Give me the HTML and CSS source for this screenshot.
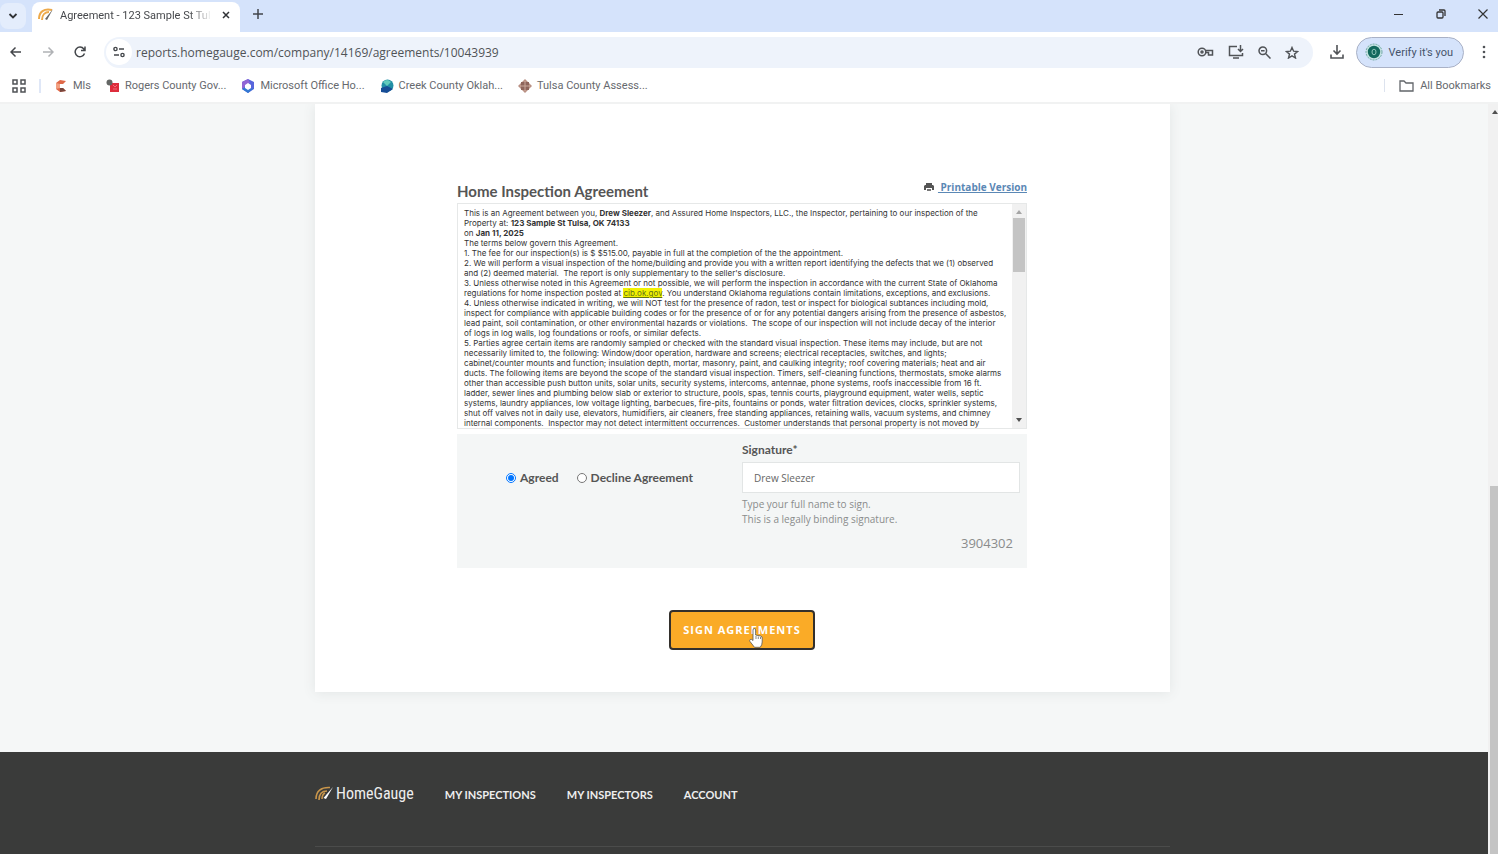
FILE: index.html
```html
<!DOCTYPE html>
<html lang="en">
    <head>
        <meta charset="utf-8">
        <title>Agreement - 123 Sample St Tulsa</title>
        <link rel="stylesheet" href="styles.css">
    </head>
    <body>
        <header class="browser">
            <div class="tab-strip">
                <button class="tab-search" aria-label="Search tabs">
                    <svg width="10" height="8" viewBox="0 0 10 8"><path d="M1.500 2l3.500 3.500L8.500 2" fill="none" stroke="#303236" stroke-width="1.800"/></svg>
                </button>
                <div class="tab">
                    <svg class="tab-icon" width="16" height="14" viewBox="0 0 16 14"><path d="M1 11C1 4 6 0 14 2M4 12C4 7 7 4 11 4" fill="none" stroke="#eda94a" stroke-width="2"/><path d="M15 1L7 11l2 1z" fill="#666"/></svg>
                    <span class="tab-title">Agreement - 123 Sample St Tul</span>
                    <button class="tab-close" aria-label="Close tab">
                        <svg width="8" height="8" viewBox="0 0 8 8"><path d="M1 1l6 6M7 1L1 7" stroke="#303236" stroke-width="1.500"/></svg>
                    </button>
                </div>
                <button class="tab-new" aria-label="New tab">
                    <svg width="10" height="10" viewBox="0 0 10 10"><path d="M5 0v10M0 5h10" stroke="#41454c" stroke-width="1.500"/></svg>
                </button>
                <div class="window-buttons">
                    <button aria-label="Minimize"><svg width="10" height="10" viewBox="0 0 10 10"><path d="M0 5.500h9" stroke="#333"/></svg></button>
                    <button aria-label="Restore"><svg width="10" height="10" viewBox="0 0 10 10" fill="none" stroke="#333" stroke-width="1.300"><rect x="1" y="3" width="6" height="6" rx="1"/><path d="M3 1h5a1 1 0 0 1 1 1v5"/></svg></button>
                    <button aria-label="Close"><svg width="10" height="10" viewBox="0 0 10 10"><path d="M0.500 0.500l9 9M9.500 0.500l-9 9" stroke="#333" stroke-width="1.200"/></svg></button>
                </div>
            </div>

            <div class="toolbar">
                <nav class="toolbar-nav">
                    <button aria-label="Back"><svg width="12" height="12" viewBox="0 0 12 12" fill="none" stroke="#44474b" stroke-width="1.500"><path d="M11 6H1M5.500 1.500L1 6l4.500 4.500"/></svg></button>
                    <button aria-label="Forward"><svg width="12" height="12" viewBox="0 0 12 12" fill="none" stroke="#b0b2b5" stroke-width="1.500"><path d="M1 6h10M6.500 1.500L11 6l-4.500 4.500"/></svg></button>
                    <button aria-label="Reload"><svg width="12" height="12" viewBox="0 0 12 12" fill="none" stroke="#44474b" stroke-width="1.500"><path d="M10.500 7.500A4.800 4.800 0 1 1 9.800 3L11 4.500M11 0.500v4H7"/></svg></button>
                </nav>
                <div class="omnibox">
                    <button class="site-info" aria-label="Site information"><svg width="12" height="12" viewBox="0 0 12 12" fill="none" stroke="#44474b" stroke-width="1.400"><circle cx="2.500" cy="3" r="1.600"/><path d="M6 3h5M1 9h5"/><circle cx="9.500" cy="9" r="1.600"/></svg></button>
                    <input class="url" type="text" aria-label="Address" value="reports.homegauge.com/company/14169/agreements/10043939">
                    <div class="omnibox-actions">
                        <button aria-label="Passwords"><svg width="17" height="10" viewBox="0 0 17 10" fill="none" stroke="#505357" stroke-width="1.500"><circle cx="5" cy="5" r="3.800"/><circle cx="5" cy="5" r="1"/><path d="M8.500 3.500H15.500V8h-4V5.500H9"/></svg></button>
                        <button aria-label="Install app"><svg width="16" height="14" viewBox="0 0 16 14" fill="none" stroke="#505357" stroke-width="1.500"><path d="M9 1.500H1.500v9h13V8M5 13h6M12.500 0v6M10 4l2.500 2.500L15 4"/></svg></button>
                        <button aria-label="Zoom"><svg width="13" height="13" viewBox="0 0 13 13" fill="none" stroke="#505357" stroke-width="1.500"><circle cx="4.800" cy="4.800" r="3.800"/><path d="M7.800 7.800L12.500 12.500M3 4.800h3.600"/></svg></button>
                        <button aria-label="Bookmark"><svg width="14" height="13" viewBox="0 0 14 13" fill="none" stroke="#505357" stroke-width="1.400"><path d="M7 1.500l1.600 3.700 4 .3-3.100 2.600 1 3.900L7 9.900 3.500 12l1-3.900L1.400 5.500l4-.3z"/></svg></button>
                    </div>
                </div>
                <button class="download" aria-label="Downloads"><svg width="14" height="14" viewBox="0 0 14 14" fill="none" stroke="#505357" stroke-width="1.600"><path d="M7 0v9M3.500 5.500L7 9l3.500-3.500M1 9.500V13h12V9.500"/></svg></button>
                <button class="verify">
                    <svg width="18" height="18" viewBox="0 0 18 18"><circle cx="9" cy="9" r="8" fill="#c5e3e2" stroke="#75aaa7" stroke-dasharray="2 1"/><circle cx="9" cy="9" r="6.200" fill="#12695c"/><ellipse cx="9" cy="9" rx="2" ry="2.800" fill="none" stroke="#8cc4b6"/></svg>
                    Verify it's you
                </button>
                <button class="more" aria-label="More"><svg width="4" height="14" viewBox="0 0 4 14" fill="#505357"><circle cx="2" cy="2" r="1.300"/><circle cx="2" cy="7" r="1.300"/><circle cx="2" cy="12" r="1.300"/></svg></button>
            </div>

            <nav class="bookmarks">
                <button class="apps" aria-label="Apps"><svg width="14" height="14" viewBox="0 0 14 14" fill="none" stroke="#505357" stroke-width="1.500"><path d="M1 1h4v4H1zM9 1h4v4H9zM1 9h4v4H1zM9 9h4v4H9z"/></svg></button>
                <a class="bookmark" href="#"><svg width="14" height="14" viewBox="0 0 14 14"><path d="M12 2L6 1 2 4v6l4 3 6-1-3-3H6V5h3z" fill="#df6848"/><path d="M2 4l4 1v4l-4 1z" fill="#f2a081"/><path d="M6 9h3l3 3-6 1z" fill="#77463d"/></svg>Mls</a>
                <a class="bookmark" href="#"><svg width="14" height="14" viewBox="0 0 14 14"><path d="M4 4h9v9H4z" fill="#dd2d3c"/><circle cx="3.500" cy="3.500" r="3" fill="#646765"/><path d="M7 6l2 2 2-2M7 10h4" stroke="#f36b76" fill="none"/></svg>Rogers County Gov...</a>
                <a class="bookmark" href="#"><svg width="14" height="14" viewBox="0 0 14 14"><path d="M7 0l6 3v7l-6 4-6-4V3z" fill="#5865dc"/><path d="M1 3l6-3 2 4-5 2v4l-3 0z" fill="#9165d5"/><path d="M1 10l3-2 5 2 4-1-6 5z" fill="#3379d3"/><path d="M7 4l3 2v3l-3 2-3-2V6z" fill="#fff"/></svg>Microsoft Office Ho...</a>
                <a class="bookmark" href="#"><svg width="14" height="14" viewBox="0 0 14 14"><circle cx="7.500" cy="6.500" r="6" fill="#218ea5"/><path d="M3 3q4-4 8 0L7 7z" fill="#61cbbc"/><path d="M1 9l6-2 6 3-6 4-6-1z" fill="#164d96"/></svg>Creek County Oklah...</a>
                <a class="bookmark" href="#"><svg width="14" height="14" viewBox="0 0 14 14"><path d="M7 0l3 3 4 4-4 4-3 3-3-3-4-4 4-4z" fill="#b99083"/><path d="M3 3h8v8H3z" fill="#8e655c"/><path d="M7 2v10M2 7h10" stroke="#c9a89b"/></svg>Tulsa County Assess...</a>
                <a class="all-bookmarks" href="#"><svg width="15" height="12" viewBox="0 0 15 12" fill="none" stroke="#62656a" stroke-width="1.300"><path d="M1 1h4l2 2h7v8H1z"/></svg>All Bookmarks</a>
            </nav>
        </header>

        <div class="viewport">
            <div class="page">
                <main class="card-wrap">
                    <form class="card">
                        <div class="agreement-head">
                            <h1>Home Inspection Agreement</h1>
                            <div class="print">
                                <svg width="10" height="9" viewBox="0 0 10 9"><path d="M2 0h6v2H2zM1 2h8l1 1v4H8V5H2v2H0V3z" fill="#555"/><path d="M3 6h4v2H3z" fill="#777"/></svg>
                                <a href="#">&nbsp;Printable Version</a>
                            </div>
                        </div>

                        <div class="terms">
                            <div class="terms-text">
                                This is an Agreement between you, <b>Drew Sleezer</b>, and Assured Home Inspectors, LLC., the Inspector, pertaining to our inspection of the<br>
                                Property at: <b>123 Sample St Tulsa, OK 74133</b><br>
                                on <b>Jan 11, 2025</b><br>
                                The terms below govern this Agreement.<br>
                                1. The fee for our inspection(s) is $ $515.00, payable in full at the completion of the the appointment.<br>
                                2. We will perform a visual inspection of the home/building and provide you with a written report identifying the defects that we (1) observed<br>
                                and (2) deemed material.&nbsp; The report is only supplementary to the seller's disclosure.<br>
                                3. Unless otherwise noted in this Agreement or not possible, we will perform the inspection in accordance with the current State of Oklahoma<br>
                                regulations for home inspection posted at <a class="highlight" href="#">cib.ok.gov</a>. You understand Oklahoma regulations contain limitations, exceptions, and exclusions.<br>
                                4. Unless otherwise indicated in writing, we will NOT test for the presence of radon, test or inspect for biological subtances including mold,<br>
                                inspect for compliance with applicable building codes or for the presence of or for any potential dangers arising from the presence of asbestos,<br>
                                lead paint, soil contamination, or other environmental hazards or violations.&nbsp; The scope of our inspection will not include decay of the interior<br>
                                of logs in log walls, log foundations or roofs, or similar defects.<br>
                                5. Parties agree certain items are randomly sampled or checked with the standard visual inspection. These items may include, but are not<br>
                                necessarily limited to, the following: Window/door operation, hardware and screens; electrical receptacles, switches, and lights;<br>
                                cabinet/counter mounts and function; insulation depth, mortar, masonry, paint, and caulking integrity; roof covering materials; heat and air<br>
                                ducts. The following items are beyond the scope of the standard visual inspection. Timers, self-cleaning functions, thermostats, smoke alarms<br>
                                other than accessible push button units, solar units, security systems, intercoms, antennae, phone systems, roofs inaccessible from 16 ft.<br>
                                ladder, sewer lines and plumbing below slab or exterior to structure, pools, spas, tennis courts, playground equipment, water wells, septic<br>
                                systems, laundry appliances, low voltage lighting, barbecues, fire-pits, fountains or ponds, water filtration devices, clocks, sprinkler systems,<br>
                                shut off valves not in daily use, elevators, humidifiers, air cleaners, free standing appliances, retaining walls, vacuum systems, and chimney<br>
                                internal components.&nbsp; Inspector may not detect intermittent occurrences.&nbsp; Customer understands that personal property is not moved by
                            </div>
                            <div class="terms-scroll">
                                <svg width="6" height="4" viewBox="0 0 6 4"><path d="M0 4l3-4 3 4z" fill="#a5a5a5"/></svg>
                                <div class="terms-thumb"></div>
                                <svg width="6" height="4" viewBox="0 0 6 4"><path d="M0 0l3 4 3-4z" fill="#505050"/></svg>
                            </div>
                        </div>

                        <div class="sign">
                            <div class="choices">
                                <label><input type="radio" name="answer" checked>Agreed</label>
                                <label><input type="radio" name="answer">Decline Agreement</label>
                            </div>
                            <div class="signature">
                                <label for="signature">Signature*</label>
                                <input id="signature" type="text" value="Drew Sleezer">
                                <p class="hint">Type your full name to sign.<br>This is a legally binding signature.</p>
                                <p class="number">3904302</p>
                            </div>
                        </div>

                        <div class="submit">
                            <button class="submit-button" type="button">Sign Agreements</button>
                            <svg class="pointer" width="14" height="20" viewBox="0 0 14 20"><path d="M4 12V2q0-1.500 1.300-1.500T6.600 2v5l5 1q1.600.4 1.600 2v4q0 3-2 5.300H5.500L1 13.500q-.8-1.300.3-2 1.200-.6 2.700 1z" fill="#fff" stroke="#555" stroke-width=".8"/><path d="M7 8v3M9.300 8.500V11M11.500 9v2" stroke="#555" stroke-width=".7"/></svg>
                        </div>
                    </form>
                </main>

                <footer class="footer">
                    <div class="footer-inner">
                        <a class="logo" href="#"><svg width="19" height="15" viewBox="0 0 19 15"><path d="M1 13C1 5 6 1 15 1.500M4 14c0-6 3-9 8-9M7 13c0-3 1-5 3-6" fill="none" stroke="#c9964b" stroke-width="1.600"/><path d="M18 1L8.500 12l2.500 1z" fill="#fff"/></svg>HomeGauge</a>
                        <a href="#">My Inspections</a>
                        <a href="#">My Inspectors</a>
                        <a href="#">Account</a>
                    </div>
                </footer>
            </div>
            <div class="page-scroll">
                <svg width="6" height="4" viewBox="0 0 6 4"><path d="M0 4l3-4 3 4z" fill="#505050"/></svg>
                <div class="page-thumb"></div>
            </div>
        </div>
    </body>
</html>
```
FILE: styles.css
```css
* {
    box-sizing: border-box;
}
body {
    margin: 0;
    height: 100vh;
    display: flex;
    flex-direction: column;
    overflow: hidden;
    font-family: "Open Sans", sans-serif;
    color: #555; }
button {
    border: 0;
    padding: 0;
    background: none;
    font-family: inherit;
    display: flex;
    align-items: center;
    justify-content: center; }
a {
    color: inherit;
    text-decoration: none; }
svg {
    flex: none; }

/* browser */
.browser {
    flex: none;
    background: #fff;
    border-bottom: 2px solid #f1f2f2;
    font-family: Roboto, sans-serif; }
.tab-strip {
    height: 32px;
    display: flex;
    align-items: center;
    background: #d5e3fb; }
.tab-search {
    width: 26px;
    height: 26px;
    margin-right: 6px;
    border-radius: 8px;
    background: #e4edfc; }
.tab {
    display: flex;
    align-items: center;
    width: 208px;
    height: 30px;
    margin-top: 2px;
    padding: 0 8px 4px 6px;
    border-radius: 8px 8px 0 0;
    background: #fff; }
.tab-title {
    flex: 1;
    margin: 0 8px 0 6px;
    white-space: nowrap;
    font-size: 11px;
    color: #46484c;
    mask-image: linear-gradient(90deg, #000 85%, transparent); }
.tab-close {
    width: 12px;
    height: 16px; }
.tab-new {
    width: 16px;
    height: 24px;
    margin: 0 0 4px 10px; }
.window-buttons {
    margin: 0 10px 4px auto;
    display: flex;
    gap: 32px; }

.toolbar {
    height: 40px;
    display: flex;
    align-items: center;
    padding-right: 12px; }
.toolbar-nav {
    display: flex;
    gap: 20px;
    padding: 0 18px 0 10px; }
.omnibox {
    flex: 1;
    display: flex;
    align-items: center;
    height: 31px;
    padding: 0 14px 0 2px;
    border-radius: 16px;
    background: #eef3fb; }
.site-info {
    width: 26px;
    height: 26px;
    border-radius: 50%;
    background: #fff; }
.url {
    flex: 1;
    border: 0;
    padding: 0 4px;
    background: none;
    font: 12px "Open Sans", sans-serif;
    color: #505357; }
.omnibox-actions {
    display: flex;
    gap: 14px; }
.download {
    margin: 0 12px 0 17px; }
.verify {
    height: 31px;
    gap: 6px;
    padding: 0 10px 0 8px;
    border: 1px solid #a9b1c6;
    border-radius: 16px;
    background: #d5e3fb;
    font-size: 11px;
    color: #45536a; }
.more {
    margin-left: 18px; }

.bookmarks {
    height: 30px;
    display: flex;
    align-items: center;
    padding: 0 7px 3px 12px;
    font-size: 11px;
    color: #66696e; }
.apps {
    margin-right: 13px;
    padding-right: 13px;
    border-right: 2px solid #dfe7f7; }
.bookmark {
    display: flex;
    align-items: center;
    gap: 5px;
    margin-right: 15px; }
.all-bookmarks {
    margin-left: auto;
    padding-left: 14px;
    border-left: 1px solid #dde3ee;
    display: flex;
    align-items: center;
    gap: 6px; }

/* page */
.viewport {
    flex: 1;
    min-height: 0;
    display: flex; }
.page {
    flex: 1;
    overflow: hidden;
    background: #f5f7f7; }
.card-wrap {
    padding: 0 3px 60px 0; }
.card {
    width: 855px;
    max-width: 100%;
    margin: 0 auto;
    padding: 76px 143px 42px 142px;
    background: #fff;
    box-shadow: 0 1px 12px #e2e5e5; }
.page-scroll {
    width: 10px;
    display: flex;
    flex-direction: column;
    justify-content: space-between;
    align-items: flex-end;
    padding-top: 6px;
    background: #f1f1f1; }
.page-thumb {
    width: 8px;
    height: 49.5%;
    background: #c4c4c4; }

.agreement-head {
    display: flex;
    justify-content: space-between;
    height: 23px; }
.agreement-head h1 {
    margin: 0;
    font: bold 15px/22px Lato, sans-serif;
    color: #555; }
.print {
    display: flex;
    align-items: center;
    gap: 4px;
    height: 14px;
    font-size: 10px;
    font-weight: bold; }
.print a {
    color: #5b88b5;
    text-decoration: underline; }

.terms {
    display: flex;
    height: 226px;
    border: 1px solid #e6e8e8; }
.terms-text {
    flex: 1;
    padding: 4px 0 0 6px;
    overflow: hidden;
    white-space: nowrap;
    font: 8px/10px Inter, sans-serif;
    color: #333; }
.highlight {
    background: #f2f200;
    color: #62711b;
    text-decoration: underline; }
.terms-scroll {
    width: 14px;
    display: flex;
    flex-direction: column;
    align-items: center;
    padding: 6px 0;
    background: #f1f1f1; }
.terms-thumb {
    width: 12px;
    height: 54px;
    margin: 4px 0 auto;
    background: #c4c4c4; }

.sign {
    display: flex;
    margin-top: 5px;
    height: 134px;
    padding: 7px 7px 0 49px;
    background: #f4f6f6; }
.choices {
    flex: 1;
    display: flex;
    gap: 18px;
    padding-top: 29px;
    font: bold 12px/16px Lato, sans-serif; }
.choices label {
    display: flex;
    align-items: center;
    height: 16px;
    gap: 4px; }
.choices input {
    width: 10px;
    height: 10px;
    margin: 0; }
.signature {
    width: 278px; }
.signature label {
    display: block;
    margin-bottom: 4px;
    font: bold 12px/17px Lato, sans-serif; }
.signature input {
    display: block;
    width: 100%;
    height: 31px;
    padding: 0 11px;
    border: 1px solid #e2e5e5;
    background: #fff;
    font: 10px "Open Sans", sans-serif;
    color: #666; }
.hint {
    margin: 4px 0 7px;
    font-size: 10px;
    line-height: 15px;
    color: #8a8c8c; }
.number {
    margin: 0;
    padding-right: 7px;
    text-align: right;
    font-size: 13px;
    line-height: 18px;
    color: #8a8c8c; }

.submit {
    position: relative;
    width: 146px;
    margin: 42px auto 0; }
.submit-button {
    width: 100%;
    height: 40px;
    padding-bottom: 2px;
    border: 2px solid #33302c;
    border-radius: 4px;
    background: #faab27;
    font-size: 11px;
    font-weight: bold;
    letter-spacing: 1px;
    text-transform: uppercase;
    color: #fff; }
.pointer {
    position: absolute;
    left: 80px;
    top: 18px; }

.footer {
    height: 102px;
    padding-right: 3px;
    background: #3a3b3a; }
.footer-inner {
    width: 855px;
    max-width: 100%;
    height: 95px;
    margin: auto;
    padding-top: 30px;
    border-bottom: 1px solid #4b4c4b;
    display: flex;
    gap: 31px;
    font: bold 11px/26px Lato, sans-serif;
    text-transform: uppercase;
    color: #eee; }
.logo {
    display: flex;
    align-items: center;
    gap: 2px;
    height: 22px;
    font: 16px "Roboto Condensed", Roboto, sans-serif;
    text-transform: none; }
```
